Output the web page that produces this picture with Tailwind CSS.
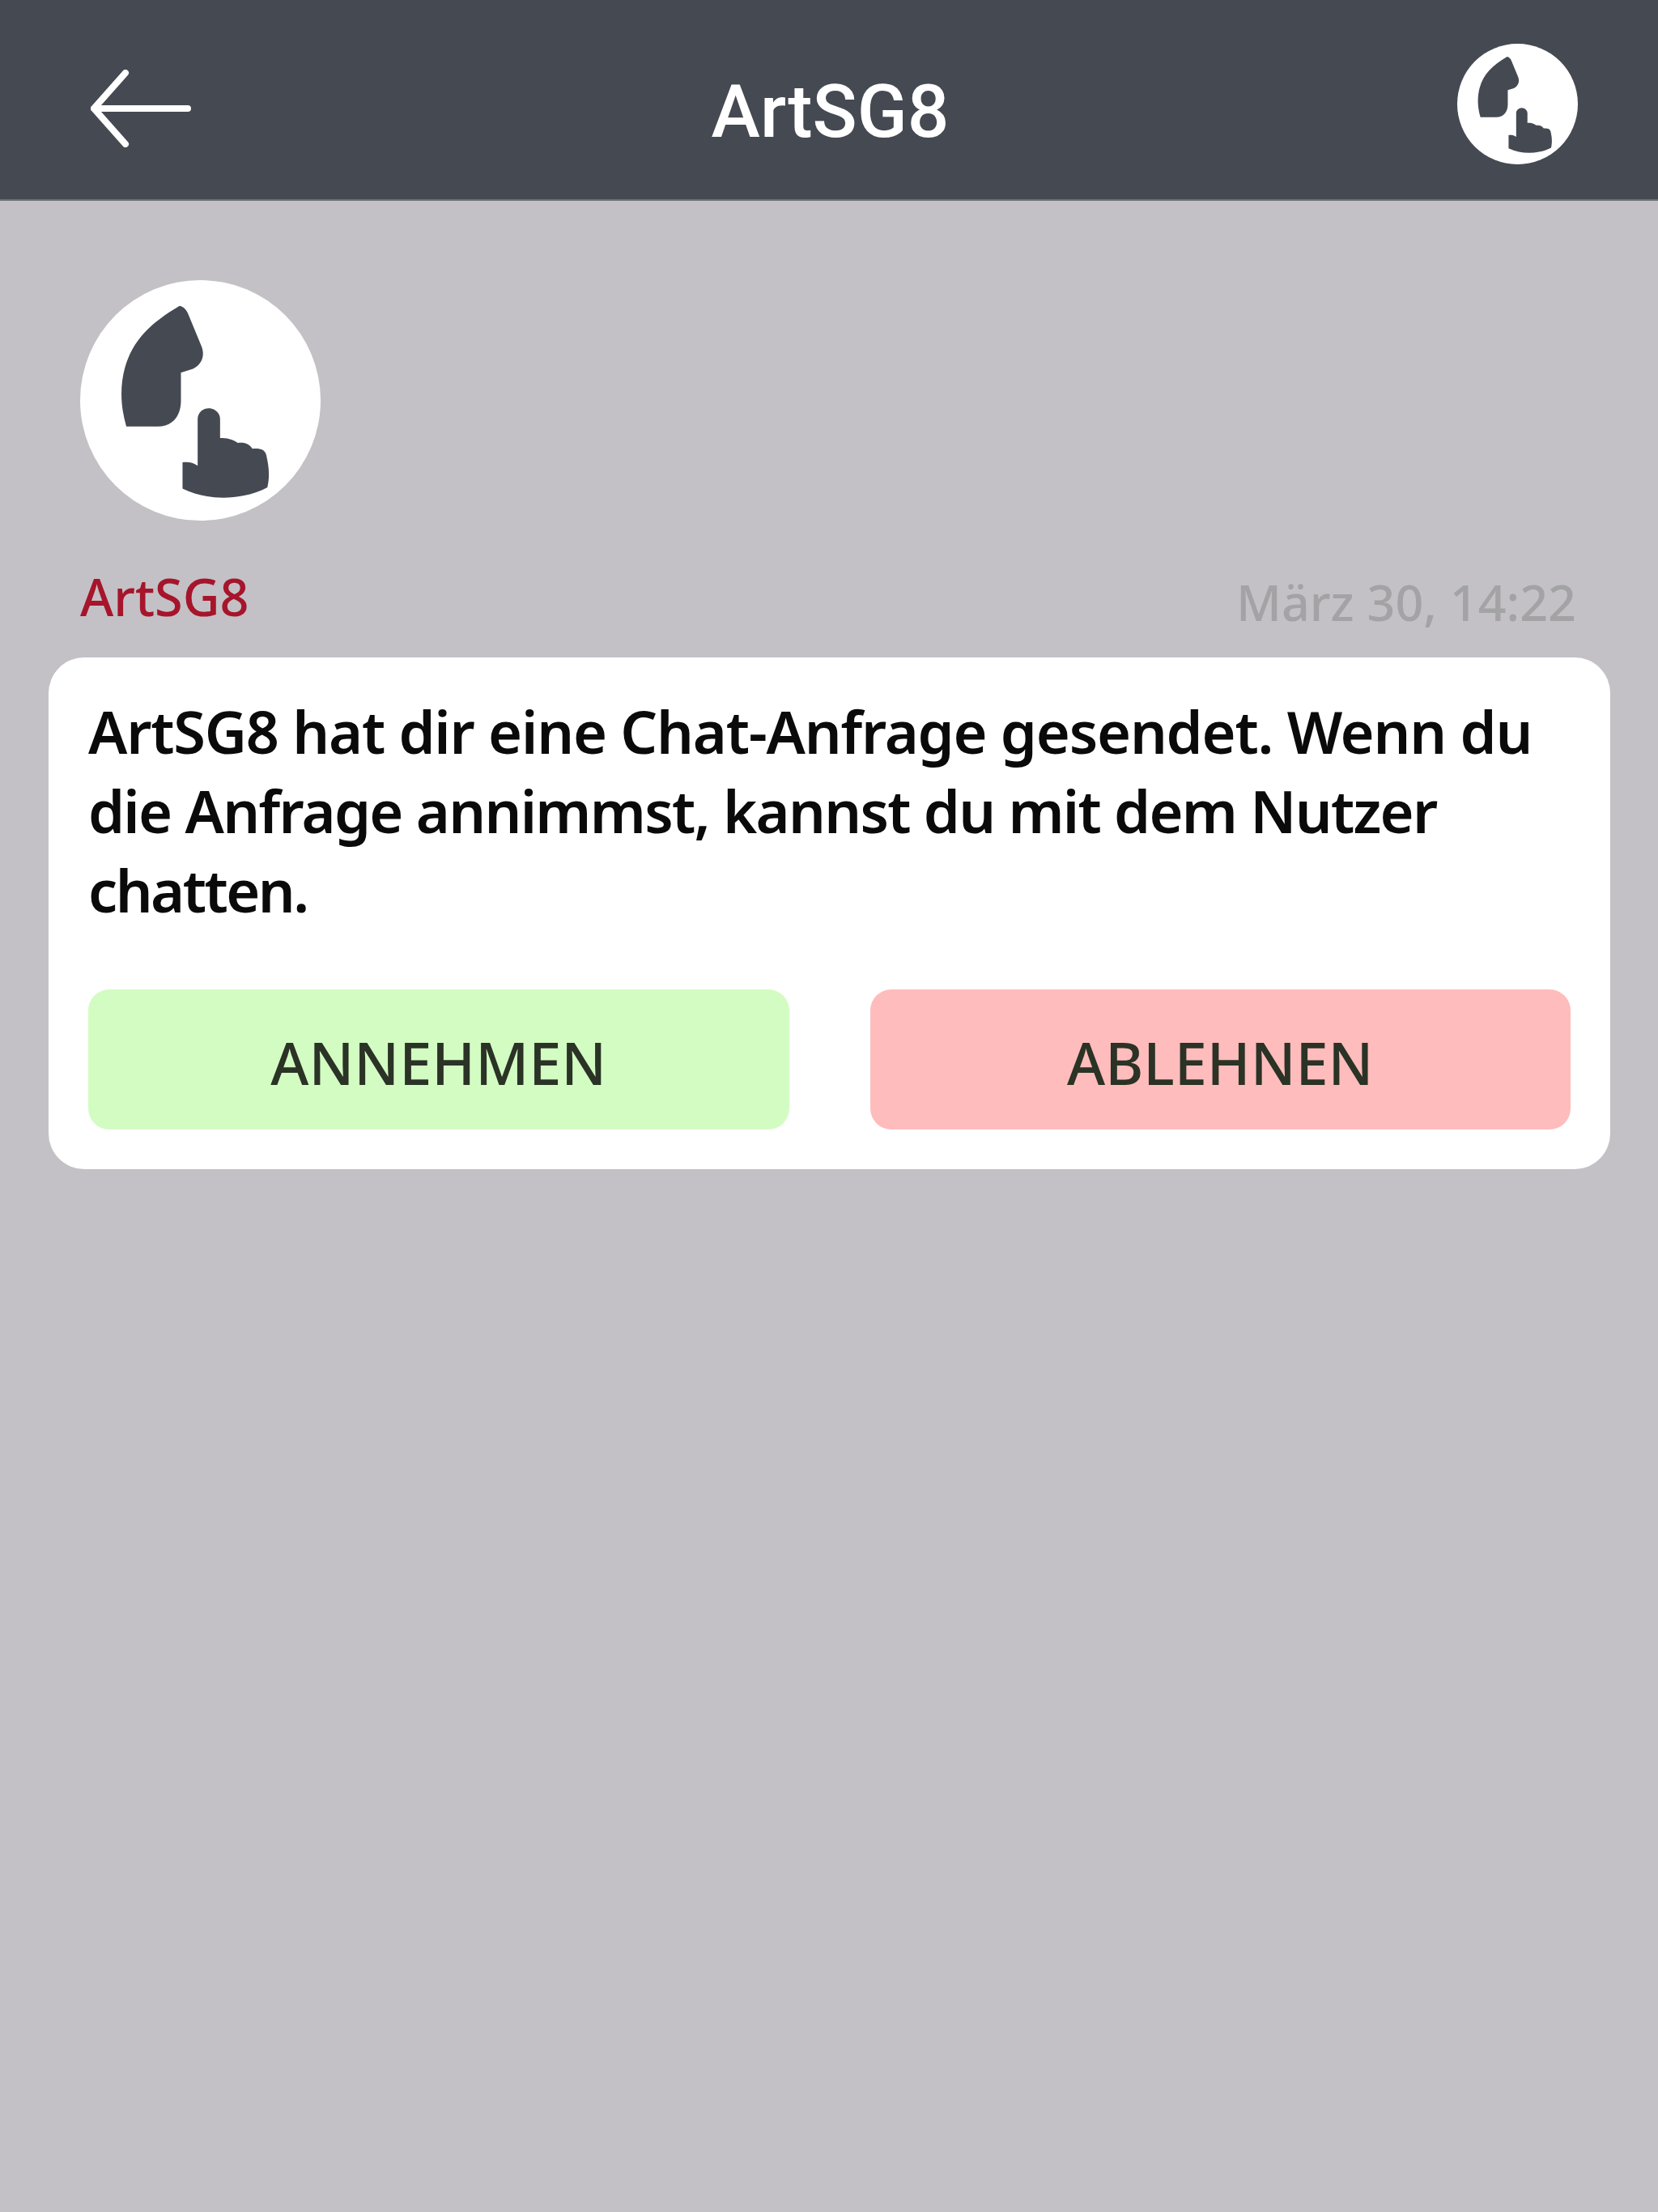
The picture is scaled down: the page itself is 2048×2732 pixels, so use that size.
<!DOCTYPE html>
<html lang="de">
<head>
    <meta charset="UTF-8">
    <title>ArtSG8</title>
    <script src="https://cdn.jsdelivr.net/npm/@tailwindcss/browser@4"></script>
</head>
<body class="bg-[#c3c1c6] min-h-screen font-['Noto_Sans','Open_Sans',sans-serif]">

    <!-- Header -->
    <header class="grid grid-cols-[1fr_auto_1fr] items-center h-[248px] bg-[#454952] border-b-2 border-[#6d7078]">
        <div class="pl-[112px] pt-[22px]">
            <svg class="w-[124px] h-[96px] block" viewBox="0 0 124 96" fill="none" stroke="white" stroke-width="8" stroke-linecap="round" stroke-linejoin="round">
                <path d="M4 48H120M43 4L4 48M4 48L43 92"/>
            </svg>
        </div>
        <h1 class="font-['Roboto',sans-serif] font-medium text-[91px] leading-none text-white pt-[30px] pl-[3px]">ArtSG8</h1>
        <div class="flex justify-end pr-[99px] pt-[10px]">
            <div class="w-[149px] h-[149px] rounded-full bg-white">
                <svg class="w-full h-full block" viewBox="57 48 890 890" fill="#454952">
                    <path d="M425 143C442 146 452 160 458 176L505 290C520 325 510 358 475 376L430 390V500C428 555 395 590 345 590H228C205 510 205 440 222 375C250 270 320 205 425 143Z"/>
                    <path d="M533 522C510 522 492 540 492 562V735C475 722 458 720 436 722V820C510 855 590 860 660 846C695 840 725 828 750 815C760 770 755 735 746 695C740 675 725 670 695 672C680 650 660 648 640 650C620 635 600 632 575 632V562C575 540 556 522 533 522Z"/>
                </svg>
            </div>
        </div>
    </header>

    <!-- Sender -->
    <div class="pt-[98px] pl-[99px]">
        <div class="w-[297px] h-[297px] rounded-full bg-white">
            <svg class="w-full h-full block" viewBox="57 48 890 890" fill="#454952">
                <path d="M425 143C442 146 452 160 458 176L505 290C520 325 510 358 475 376L430 390V500C428 555 395 590 345 590H228C205 510 205 440 222 375C250 270 320 205 425 143Z"/>
                <path d="M533 522C510 522 492 540 492 562V735C475 722 458 720 436 722V820C510 855 590 860 660 846C695 840 725 828 750 815C760 770 755 735 746 695C740 675 725 670 695 672C680 650 660 648 640 650C620 635 600 632 575 632V562C575 540 556 522 533 522Z"/>
            </svg>
        </div>
    </div>

    <div class="flex justify-between items-start pl-[99px] pr-[101px] mt-[51px] h-[118px]">
        <span class="text-[63px] leading-[86px] font-medium text-[#a6152b]">ArtSG8</span>
        <span class="text-[61px] leading-[82px] font-medium text-[#a3a3a5] mt-[9px]">März 30, 14:22</span>
    </div>

    <!-- Chat request card -->
    <div class="ml-[60px] w-[1929px] bg-white rounded-[44px] px-[49px] pt-[42px] pb-[49px]">
        <p class="text-[72px] leading-[98px] font-semibold text-[#0a0a0a] mb-[74px] whitespace-nowrap">
            <span class="block tracking-[-1.2px]">ArtSG8 hat dir eine Chat-Anfrage gesendet. Wenn du</span>
            <span class="block tracking-[-1.7px]">die Anfrage annimmst, kannst du mit dem Nutzer</span>
            <span class="block tracking-[-2.5px]">chatten.</span>
        </p>
        <div class="flex gap-[100px]">
            <button class="flex-1 h-[173px] rounded-[26px] bg-[#d3fcc3] text-[72px] font-medium text-[#2a3325] pt-[6px]">ANNEHMEN</button>
            <button class="flex-1 h-[173px] rounded-[26px] bg-[#ffbcbc] text-[72px] font-medium text-[#2a3325] pt-[6px]">ABLEHNEN</button>
        </div>
    </div>

</body>
</html>
